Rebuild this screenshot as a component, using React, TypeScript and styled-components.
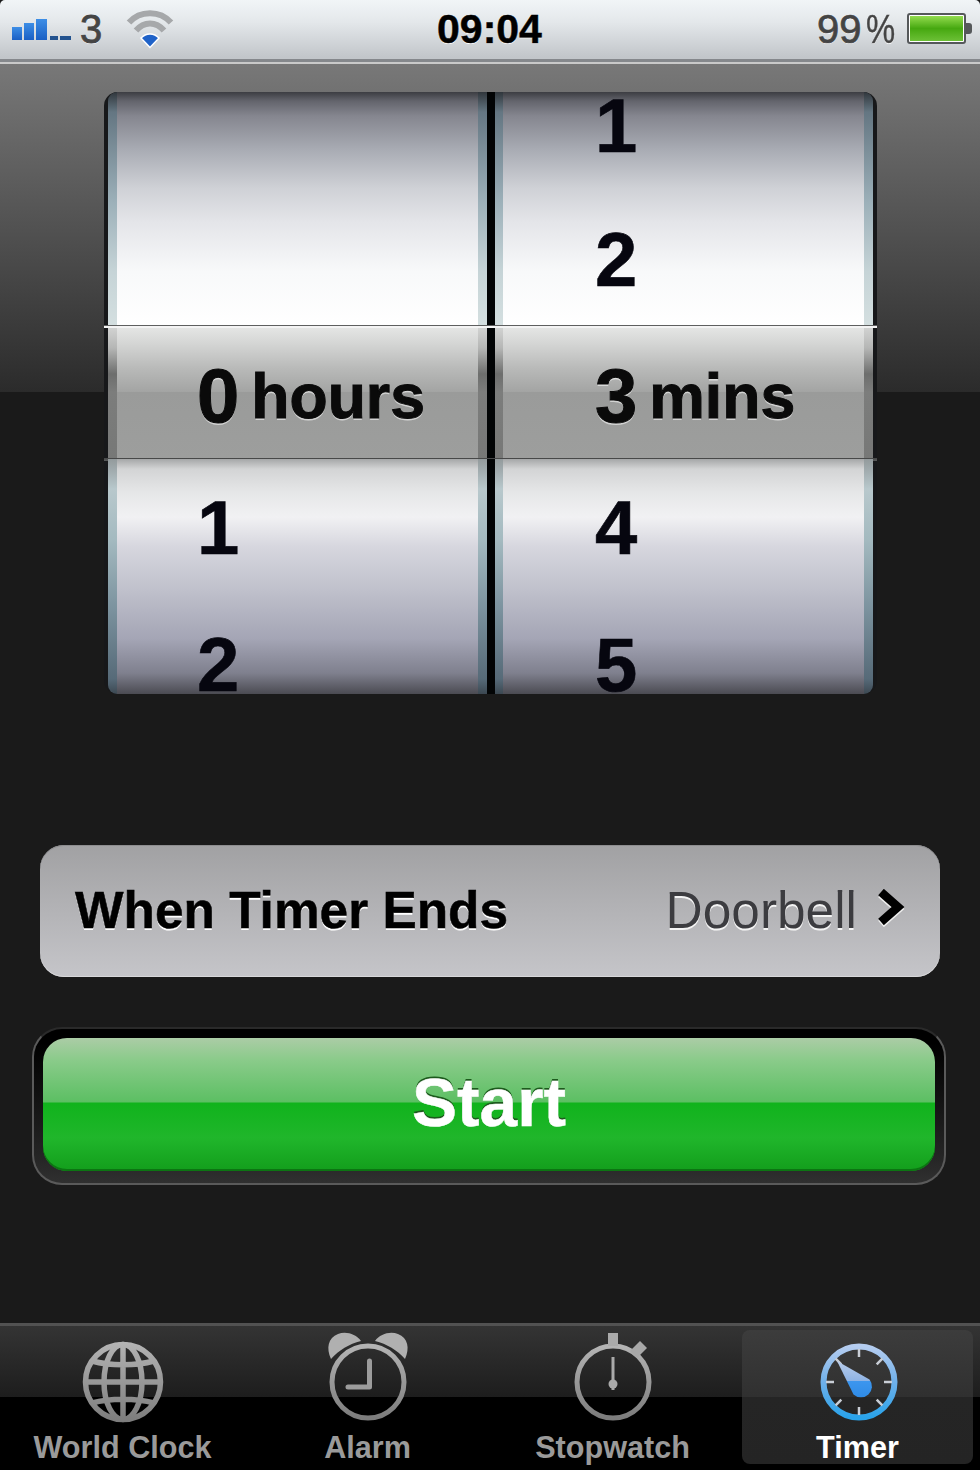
import React from 'react';
import styled, { createGlobalStyle, css } from 'styled-components';

const GlobalStyle = createGlobalStyle`
  html, body {
    margin: 0;
    padding: 0;
    background: #000;
  }
  * {
    box-sizing: border-box;
  }
`;

const Screen = styled.div`
  width: 980px;
  height: 1470px;
  display: flex;
  flex-direction: column;
  overflow: hidden;
  font-family: 'Liberation Sans', Arial, sans-serif;
  background: #1a1a1a;
`;

// status bar
const StatusBar = styled.div`
  height: 64px;
  flex: none;
  display: grid;
  grid-template-columns: 1fr auto 1fr;
  align-items: center;
  padding: 0 8px 5px 12px;
  border-radius: 5px 5px 0 0;
  background: linear-gradient(#f1f5f7, #e4e8eb 35%, #c2c6ca 92%);
  border-bottom: 2px solid #c9c9c9;
  box-shadow: inset 0 -3px 0 #85888c;
`;

const StatusLeft = styled.div`
  display: flex;
  align-items: center;
`;

const StatusRight = styled.div`
  display: flex;
  align-items: center;
  justify-content: flex-end;
`;

const Carrier = styled.span`
  font-size: 40px;
  line-height: 44px;
  color: #444;
  margin-left: 8px;
  -webkit-text-stroke: 0.8px #444;
  text-shadow: 0 1px 0 #fff;
`;

const WifiIcon = styled.svg`
  margin-left: 23px;
`;

const Clock = styled.span`
  font-size: 41px;
  line-height: 44px;
  font-weight: 700;
  color: #000;
  padding-right: 5px;
  -webkit-text-stroke: 0.5px #000;
  text-shadow: 0 1px 0 #fff;
`;

const BatteryText = styled.span`
  display: flex;
  align-items: baseline;
  gap: 5px;
  font-size: 40px;
  line-height: 44px;
  color: #444;
  margin-right: 11px;
  -webkit-text-stroke: 0.7px #444;
  text-shadow: 0 1px 0 #fff;
`;

const PercentSign = styled.span`
  display: inline-block;
  margin-right: -6px;
  transform: scaleX(0.82);
  transform-origin: left center;
  -webkit-text-stroke: 0.4px #444;
`;

// header + lower background
const Main = styled.main`
  flex: 1;
  display: flex;
  flex-direction: column;
  background: linear-gradient(#787878 0, #2b2b2b 328px, #1a1a1a 328px);
`;

// picker wheels
const Picker = styled.div`
  height: 602px;
  margin: 28px 103px 0 104px;
  display: flex;
  flex-direction: column;
  border-left: 4px solid #17181a;
  border-right: 4px solid #17181a;
  border-radius: 14px;
  background: #17181a;
  position: relative;
`;

type Part = 'top' | 'band' | 'bottom';

const wheelFill: Record<Part, string> = {
  top: 'linear-gradient(#3c3d42 0, #63646c 9px, #85868f 24px, #a9acb4 58px, #cfd1d6 96px, #e4e5e9 130px, #f8f9fa 180px, #fff 234px)',
  band: 'linear-gradient(#e6e7e6 0, #d4d5d4 18px, #b9bab9 42px, #a3a4a3 66px, #9a9b9a 66px, #9d9e9d 133px)',
  bottom: 'linear-gradient(#a5a7a8 0, #d3d4d5 10px, #e6e7e8 34px, #f1f1f3 58px, #d6d6de 88px, #c0c1cc 130px, #a4a5b5 180px, #7f808e 214px, #4b4b52 235px)',
};

const stripFill: Record<Part, string> = {
  top: 'linear-gradient(#30363c 0, #647682 20px, #9cb0b9 110px, #c6d4d7 180px, #d4dfe0 234px)',
  band: 'linear-gradient(#d4d5d4 0, #b5b6b5 22px, #6d6e6d 48px, #7c7d7c 66px, #777877 133px)',
  bottom: 'linear-gradient(#939a9c 0, #b8c8cc 30px, #a4bac0 80px, #7b929e 150px, #566a78 220px, #3c4852 235px)',
};

const Section = styled.div<{ $part: Part }>`
  display: grid;
  grid-template-columns: 9px 361px 9px 8px 8px 361px 9px;
  height: ${({ $part }) => ($part === 'band' ? 133 : $part === 'top' ? 234 : 235)}px;
  flex: none;
  position: relative;
  ${({ $part }) =>
    $part === 'top' &&
    css`
      > :first-child {
        border-top-left-radius: 10px;
      }
      > :last-child {
        border-top-right-radius: 10px;
      }
    `}
  ${({ $part }) =>
    $part === 'bottom' &&
    css`
      > :first-child {
        border-bottom-left-radius: 10px;
      }
      > :last-child {
        border-bottom-right-radius: 10px;
      }
    `}
`;

const Strip = styled.div<{ $part: Part }>`
  background: ${({ $part }) => stripFill[$part]};
`;

const Groove = styled.div`
  background: #020405;
`;

const Wheel = styled.div<{ $part: Part; $inset: number }>`
  display: flex;
  flex-direction: column;
  gap: ${({ $part }) => ($part === 'top' ? 76 : 79)}px;
  padding-left: ${({ $inset }) => $inset}px;
  padding-top: ${({ $part }) => ($part === 'bottom' ? 40 : 0)}px;
  padding-bottom: ${({ $part }) => ($part === 'top' ? 37 : 0)}px;
  justify-content: ${({ $part }) => ($part === 'top' ? 'flex-end' : 'flex-start')};
  background: ${({ $part }) => wheelFill[$part]};
`;

const Digit = styled.div`
  flex: none;
  height: 58px;
  line-height: 58px;
  font-size: 76px;
  font-weight: 700;
  color: #06060f;
  -webkit-text-stroke: 0.6px #06060f;
`;

const Selected = styled.div`
  height: 133px;
  padding-top: 6px;
  display: flex;
  align-items: center;
  gap: 12px;
  font-weight: 700;
  color: #0a0a0a;
  -webkit-text-stroke: 1px #0a0a0a;
  text-shadow: 0 2px 0 rgba(255, 255, 255, 0.55);
`;

const SelectedNumber = styled.span`
  font-size: 76px;
`;

const SelectedUnit = styled.span`
  font-size: 62.5px;
`;

// hairlines that stick out past the wheels
const BandEdge = styled.div<{ $side: 'top' | 'bottom' }>`
  position: absolute;
  left: -4px;
  right: -4px;
  height: 3px;
  ${({ $side }) =>
    $side === 'top'
      ? css`
          top: -1px;
          background: linear-gradient(#5e5f5f 0, #5e5f5f 1px, #f4f4f4 1px);
        `
      : css`
          bottom: -2px;
          background: linear-gradient(#444545, #5a5b5b);
        `}
`;

// when timer ends row
const SoundRow = styled.div`
  height: 132px;
  margin: 151px 40px 0;
  padding: 0 35px 3px 35px;
  display: flex;
  align-items: center;
  justify-content: space-between;
  border-radius: 24px;
  background: linear-gradient(#a1a1a3, #c5c5c9);
  box-shadow: inset 0 1px 0 #8d8d8f, inset 0 -1px 0 #d8d8da;
`;

const SoundLabel = styled.span`
  font-size: 51.4px;
  font-weight: 700;
  color: #000;
  -webkit-text-stroke: 0.5px #000;
  text-shadow: 0 2px 0 #fff;
`;

const SoundValue = styled.span`
  display: flex;
  align-items: center;
  gap: 20px;
  font-size: 51.4px;
  color: #3c3c40;
  text-shadow: 0 2px 0 #f4f4f4;
`;

const Chevron = styled.svg`
  margin-bottom: 6px;
  filter: drop-shadow(0 2px 0 #eee);
`;

// start button
const StartWell = styled.div`
  height: 158px;
  margin: 50px 34px 0 32px;
  padding: 9px;
  border-radius: 30px;
  border: 2px solid #5a5a5a;
  border-top-color: #2a2a2a;
  background: linear-gradient(#000 0, #000 14px, #262626 130px, #303030);
`;

const StartButton = styled.button`
  width: 100%;
  height: 133px;
  border: 0;
  padding: 0 0 4px;
  border-radius: 24px;
  font-family: inherit;
  font-size: 67.6px;
  font-weight: 700;
  color: #fff;
  -webkit-text-stroke: 0.5px #fff;
  text-shadow: 0 -2px 0 #1d5a1d;
  box-shadow: inset 0 -2px 0 #0c7512;
  background: linear-gradient(#abcca6 0, #8acb8a 22px, #5cbf63 64px, #10b31c 65px, #20b62b 100px, #139e1c 133px);
`;

// tab bar
const TabBar = styled.nav`
  margin-top: auto;
  height: 147px;
  display: grid;
  grid-template-columns: repeat(4, 1fr);
  border-top: 3px solid #525252;
  background: linear-gradient(#343434 0, #1d1d1d 71px, #000 71px);
`;

const Tab = styled.div<{ $active?: boolean }>`
  display: flex;
  flex-direction: column;
  align-items: center;
  margin: 4px 7px 6px;
  padding-top: 4px;
  border-radius: 8px;
  font-size: 30.6px;
  font-weight: 700;
  color: ${({ $active }) => ($active ? '#fff' : '#9a9a9a')};
  ${({ $active }) =>
    $active &&
    css`
      background: linear-gradient(#3c3c3c 0, #303030 67px, #252525 67px, #242424);
    `}
`;

const TabIcon = styled.svg`
  flex: none;
  display: block;
  overflow: visible;
`;

const TabLabel = styled.span`
  line-height: 34px;
  white-space: nowrap;
`;

const wheelInset = [80, 92];

function TabGradient({ id }: { id: string }) {
  return (
    <linearGradient id={id} x1="0" y1="0" x2="0" y2="1">
      <stop offset="0" stopColor="#b4b4b4" />
      <stop offset="1" stopColor="#7c7c7c" />
    </linearGradient>
  );
}

function GlobeIcon() {
  return (
    <TabIcon width="96" height="96" viewBox="0 0 96 96" fill="none">
      <defs>
        <linearGradient id="globeFill" gradientUnits="userSpaceOnUse" x1="0" y1="8" x2="0" y2="88">
          <stop offset="0" stopColor="#b4b4b4" />
          <stop offset="1" stopColor="#7c7c7c" />
        </linearGradient>
      </defs>
      <g stroke="url(#globeFill)" strokeWidth="5.500">
        <circle cx="48" cy="48" r="37.500" />
        <ellipse cx="48" cy="48" rx="19" ry="37.500" />
        <path d="M48 10v76M10.500 48h75M17 27c18 5 44 5 62 0M17 69c18-5 44-5 62 0" />
      </g>
    </TabIcon>
  );
}

function AlarmIcon() {
  return (
    <TabIcon width="96" height="96" viewBox="0 0 96 96" fill="none">
      <defs>
        <TabGradient id="alarmFill" />
      </defs>
      <circle cx="48" cy="48" r="36" stroke="url(#alarmFill)" strokeWidth="5" />
      <path d="M49.500 27v26H28" stroke="#9c9c9c" strokeWidth="5" strokeLinecap="round" strokeLinejoin="round" />
      <path d="M11 25C6 14 8 4 18 0c8-3 18 0 23 7-12 3-22 9-30 18ZM85 25c5-11 3-21-7-25-8-3-18 0-23 7 12 3 22 9 30 18Z" fill="#b0b0b0" />
    </TabIcon>
  );
}

function StopwatchIcon() {
  return (
    <TabIcon width="96" height="96" viewBox="0 0 96 96" fill="none">
      <defs>
        <TabGradient id="watchFill" />
      </defs>
      <circle cx="48" cy="48" r="36" stroke="url(#watchFill)" strokeWidth="5" />
      <path d="M43 -1h10v13H43z" fill="#aaa" />
      <path d="M75 7l7 7-10 10-7-7z" fill="#a8a8a8" />
      <path d="M48 23v33" stroke="#aaa" strokeWidth="3" />
      <circle cx="48" cy="50" r="4.500" fill="#aaa" />
    </TabIcon>
  );
}

function TimerIcon() {
  const ticks = [0, 45, 90, 135, 180, 225, 270, 315];
  return (
    <TabIcon width="96" height="96" viewBox="0 0 96 96" fill="none">
      <defs>
        <linearGradient id="timerRing" x1="0" y1="0" x2="0" y2="1">
          <stop offset="0" stopColor="#b5cdf0" />
          <stop offset="0.5" stopColor="#6fb0ea" />
          <stop offset="1" stopColor="#2aa3ea" />
        </linearGradient>
        <linearGradient id="timerHand" x1="0" y1="0" x2="0" y2="1">
          <stop offset="0" stopColor="#b9cdeb" />
          <stop offset="0.54" stopColor="#8fb3e4" />
          <stop offset="0.55" stopColor="#3d96ee" />
          <stop offset="1" stopColor="#2f8be6" />
        </linearGradient>
      </defs>
      <g transform="translate(1 0)">
        <circle cx="48" cy="48" r="35.500" stroke="url(#timerRing)" strokeWidth="6" />
        {ticks.map((a) => (
          <path key={a} d="M48 15v8" stroke="#c9ced6" strokeWidth="2.500" transform={`rotate(${a} 48 48)`} />
        ))}
        <path d="M26 27L58.500 45.500A11 11 0 0 1 42.500 60.500Z" fill="url(#timerHand)" />
      </g>
    </TabIcon>
  );
}

export default function App() {
  return (
    <Screen>
      <GlobalStyle />
      <StatusBar>
        <StatusLeft>
          <svg width="60" height="24" viewBox="0 0 60 24">
            <defs>
              <linearGradient id="bars" x1="0" y1="0" x2="0" y2="1">
                <stop offset="0" stopColor="#3d8ee6" />
                <stop offset="1" stopColor="#1a5fc4" />
              </linearGradient>
            </defs>
            <rect x="0" y="10" width="10" height="13" fill="url(#bars)" />
            <rect x="12" y="6" width="10" height="17" fill="url(#bars)" />
            <rect x="24" y="2" width="11" height="21" fill="url(#bars)" />
            <rect x="38" y="19" width="8" height="4" fill="#23538f" />
            <rect x="48" y="19" width="11" height="4" fill="#23538f" />
          </svg>
          <Carrier>3</Carrier>
          <WifiIcon width="50" height="40" viewBox="0 0 50 40" fill="none">
            <path d="M4 13.500C15 1 35 1 46 13.500" stroke="#a6a8aa" strokeWidth="6" />
            <path d="M11 21.500C19 12 31 12 39 21.500" stroke="#a6a8aa" strokeWidth="6" />
            <path d="M25 38.500L16 29C21 23.500 29 23.500 34 29Z" fill="#1f62c8" stroke="#fff" strokeWidth="1.500" />
          </WifiIcon>
        </StatusLeft>
        <Clock>09:04</Clock>
        <StatusRight>
          <BatteryText>
            99<PercentSign>%</PercentSign>
          </BatteryText>
          <svg width="65" height="32" viewBox="0 0 65 32">
            <defs>
              <linearGradient id="charge" x1="0" y1="0" x2="0" y2="1">
                <stop offset="0" stopColor="#93dc4e" />
                <stop offset="0.5" stopColor="#46a810" />
                <stop offset="1" stopColor="#6cc036" />
              </linearGradient>
            </defs>
            <rect x="1" y="1" width="57" height="29" rx="2" fill="#fff" stroke="#55585a" strokeWidth="2" />
            <rect x="3" y="3" width="53" height="25" fill="url(#charge)" />
            <path d="M59 10h3c2 0 3 1 3 3v5c0 2-1 3-3 3h-3z" fill="#55585a" />
          </svg>
        </StatusRight>
      </StatusBar>

      <Main>
        <Picker>
          <Section $part="top">
            <Strip $part="top" />
            <Wheel $part="top" $inset={wheelInset[0]} />
            <Strip $part="top" />
            <Groove />
            <Strip $part="top" />
            <Wheel $part="top" $inset={wheelInset[1]}>
              <Digit>1</Digit>
              <Digit>2</Digit>
            </Wheel>
            <Strip $part="top" />
          </Section>
          <Section $part="band">
            <BandEdge $side="top" />
            <BandEdge $side="bottom" />
            <Strip $part="band" />
            <Wheel $part="band" $inset={wheelInset[0]}>
              <Selected>
                <SelectedNumber>0</SelectedNumber>
                <SelectedUnit>hours</SelectedUnit>
              </Selected>
            </Wheel>
            <Strip $part="band" />
            <Groove />
            <Strip $part="band" />
            <Wheel $part="band" $inset={wheelInset[1]}>
              <Selected>
                <SelectedNumber>3</SelectedNumber>
                <SelectedUnit>mins</SelectedUnit>
              </Selected>
            </Wheel>
            <Strip $part="band" />
          </Section>
          <Section $part="bottom">
            <Strip $part="bottom" />
            <Wheel $part="bottom" $inset={wheelInset[0]}>
              <Digit>1</Digit>
              <Digit>2</Digit>
            </Wheel>
            <Strip $part="bottom" />
            <Groove />
            <Strip $part="bottom" />
            <Wheel $part="bottom" $inset={wheelInset[1]}>
              <Digit>4</Digit>
              <Digit>5</Digit>
            </Wheel>
            <Strip $part="bottom" />
          </Section>
        </Picker>

        <SoundRow>
          <SoundLabel>When Timer Ends</SoundLabel>
          <SoundValue>
            Doorbell
            <Chevron width="28" height="36" viewBox="0 0 28 36" fill="none">
              <path d="M4 3l17 15L4 33" stroke="#000" strokeWidth="8.500" />
            </Chevron>
          </SoundValue>
        </SoundRow>

        <StartWell>
          <StartButton>Start</StartButton>
        </StartWell>

        <TabBar>
          <Tab>
            <GlobeIcon />
            <TabLabel>World Clock</TabLabel>
          </Tab>
          <Tab>
            <AlarmIcon />
            <TabLabel>Alarm</TabLabel>
          </Tab>
          <Tab>
            <StopwatchIcon />
            <TabLabel>Stopwatch</TabLabel>
          </Tab>
          <Tab $active>
            <TimerIcon />
            <TabLabel>Timer</TabLabel>
          </Tab>
        </TabBar>
      </Main>
    </Screen>
  );
}
